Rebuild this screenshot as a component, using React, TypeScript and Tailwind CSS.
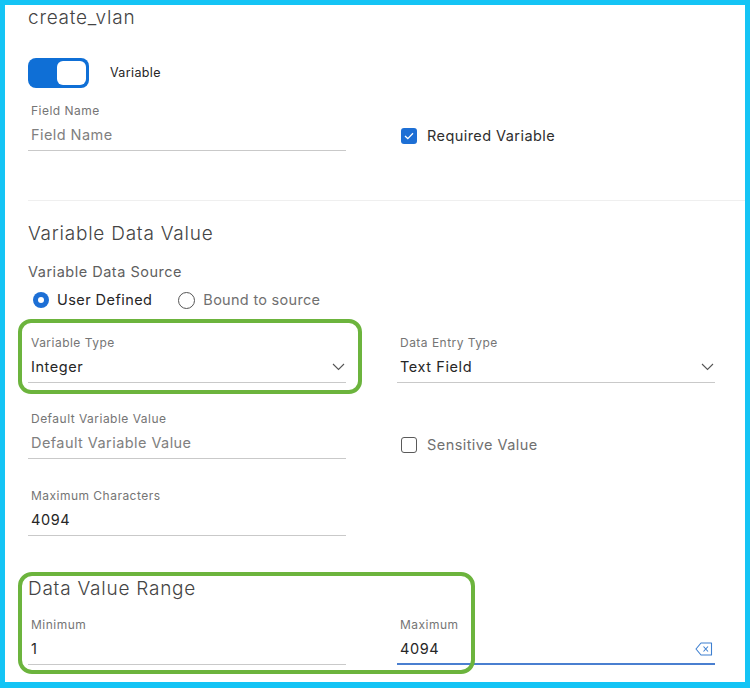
import React from "react";

const font = { fontFamily: "Inter, 'Liberation Sans', sans-serif" };

function Chevron() {
  return (
    <svg width="13" height="8" viewBox="0 0 13 8" className="shrink-0">
      <path d="M1 1 L6.5 6.5 L12 1" fill="none" stroke="#555" strokeWidth="1.1" />
    </svg>
  );
}

function Field({
  label,
  value,
  placeholder,
  chevron,
  active,
  clear,
}: {
  label: string;
  value?: string;
  placeholder?: string;
  chevron?: boolean;
  active?: boolean;
  clear?: boolean;
}) {
  return (
    <div className="w-[318px]">
      <div className="h-4 pl-[3px] text-[12px] leading-4 tracking-[0.04em] text-[#757575]">{label}</div>
      <div
        className={`mt-[6px] flex h-[26px] items-start justify-between pl-[3px] ${
          active ? "border-b-2 border-[#4a7fd0]" : "border-b border-[#c9c9c9]"
        }`}
      >
        {value ? (
          <span className="text-[14.5px] leading-5 tracking-[0.04em] text-[#262626]">{value}</span>
        ) : (
          <span className="text-[14.5px] leading-5 tracking-[0.03em] text-[#808080]">{placeholder}</span>
        )}
        {chevron && (
          <span className="mr-[1px] mt-[6px]">
            <Chevron />
          </span>
        )}
        {clear && (
          <svg width="18" height="14" viewBox="0 0 18 14" className="mr-[2px] mt-[3px]">
            <path
              d="M6 1 H16.5 V13 H6 L1 7 Z"
              fill="none"
              stroke="#3d7fd0"
              strokeWidth="1.1"
              strokeLinejoin="round"
            />
            <path d="M8.5 4.5 L13 9.5 M13 4.5 L8.5 9.5" stroke="#3d7fd0" strokeWidth="1.1" />
          </svg>
        )}
      </div>
    </div>
  );
}

function Checkbox({ checked, label }: { checked?: boolean; label: string }) {
  return (
    <div className="flex items-center gap-[10px] pl-[4px]">
      {checked ? (
        <span className="flex h-4 w-4 items-center justify-center rounded-[3px] bg-[#1d6fd5]">
          <svg width="10" height="8" viewBox="0 0 10 8">
            <path d="M1 4 L3.8 6.6 L9 1.2" fill="none" stroke="#fff" strokeWidth="1.3" />
          </svg>
        </span>
      ) : (
        <span className="h-4 w-4 rounded-[3px] border border-[#5a5a5a] bg-white" />
      )}
      <span className={`text-[14.5px] leading-5 tracking-[0.03em] ${checked ? "text-[#2e2e2e]" : "text-[#707070]"}`}>
        {label}
      </span>
    </div>
  );
}

export default function App() {
  return (
    <div
      style={font}
      className="relative h-[688px] w-[750px] overflow-hidden border-[#14c4f5] border-t-[5px] border-l-[5px] border-r-[5px] border-b-[6px] bg-white"
    >
      <div className="pl-[23px] pr-[31px] pt-[1px]">
        <div className="h-6 text-[19px] font-light leading-6 tracking-[0.04em] text-[#444]">create_vlan</div>

        <div className="mt-[28px] flex items-center gap-[21px]">
          <div className="flex h-[30px] w-[61px] items-center justify-end rounded-[8px] bg-[#0f6fd6] pr-[3px]">
            <div className="h-[24px] w-[29px] rounded-[6px] bg-white" />
          </div>
          <span className="text-[12.5px] tracking-[0.03em] text-[#262626]">Variable</span>
        </div>

        <div className="mt-[15px] grid grid-cols-[318px_318px] gap-x-[51px]">
          <Field label="Field Name" placeholder="Field Name" />
          <div className="pt-[23px]">
            <Checkbox checked label="Required Variable" />
          </div>
        </div>

        <div className="-mr-[31px] mt-[49px] border-t border-[#efefef]" />

        <div className="mt-[21px] h-6 text-[19px] font-light leading-6 tracking-[0.04em] text-[#444]">
          Variable Data Value
        </div>
        <div className="mt-[16px] text-[14.5px] leading-5 tracking-[0.035em] text-[#5f5f5f]">Variable Data Source</div>

        <div className="mt-[8px] flex h-5 items-center pl-[5px]">
          <span className="flex h-4 w-4 items-center justify-center rounded-full bg-[#1d6fd5]">
            <span className="h-[6px] w-[6px] rounded-full bg-white" />
          </span>
          <span className="ml-[8px] text-[14.5px] tracking-[0.03em] text-[#262626]">User Defined</span>
          <span className="ml-[26px] h-[17px] w-[17px] rounded-full border border-[#555] bg-white" />
          <span className="ml-[8px] text-[14.5px] tracking-[0.02em] text-[#707070]">Bound to source</span>
        </div>

        <div className="mt-[25px] grid grid-cols-[318px_318px] gap-x-[51px]">
          <Field label="Variable Type" value="Integer" chevron />
          <Field label="Data Entry Type" value="Text Field" chevron />
        </div>

        <div className="mt-[28px] grid grid-cols-[318px_318px] gap-x-[51px]">
          <Field label="Default Variable Value" placeholder="Default Variable Value" />
          <div className="pt-[24px]">
            <Checkbox label="Sensitive Value" />
          </div>
        </div>

        <div className="mt-[29px]">
          <Field label="Maximum Characters" value="4094" />
        </div>

        <div className="mt-[41px] h-6 text-[19px] font-light leading-6 tracking-[0.04em] text-[#444]">
          Data Value Range
        </div>

        <div className="mt-[16px] grid grid-cols-[318px_318px] gap-x-[51px]">
          <Field label="Minimum" value="1" />
          <Field label="Maximum" value="4094" active clear />
        </div>
      </div>

      {/* annotation highlights */}
      <div className="pointer-events-none absolute left-[13px] top-[314px] h-[75px] w-[344px] rounded-[13px] border-[4px] border-[#6cb43d]" />
      <div className="pointer-events-none absolute left-[13px] top-[567px] h-[102px] w-[457px] rounded-[14px] border-[4px] border-[#6cb43d]" />
    </div>
  );
}
